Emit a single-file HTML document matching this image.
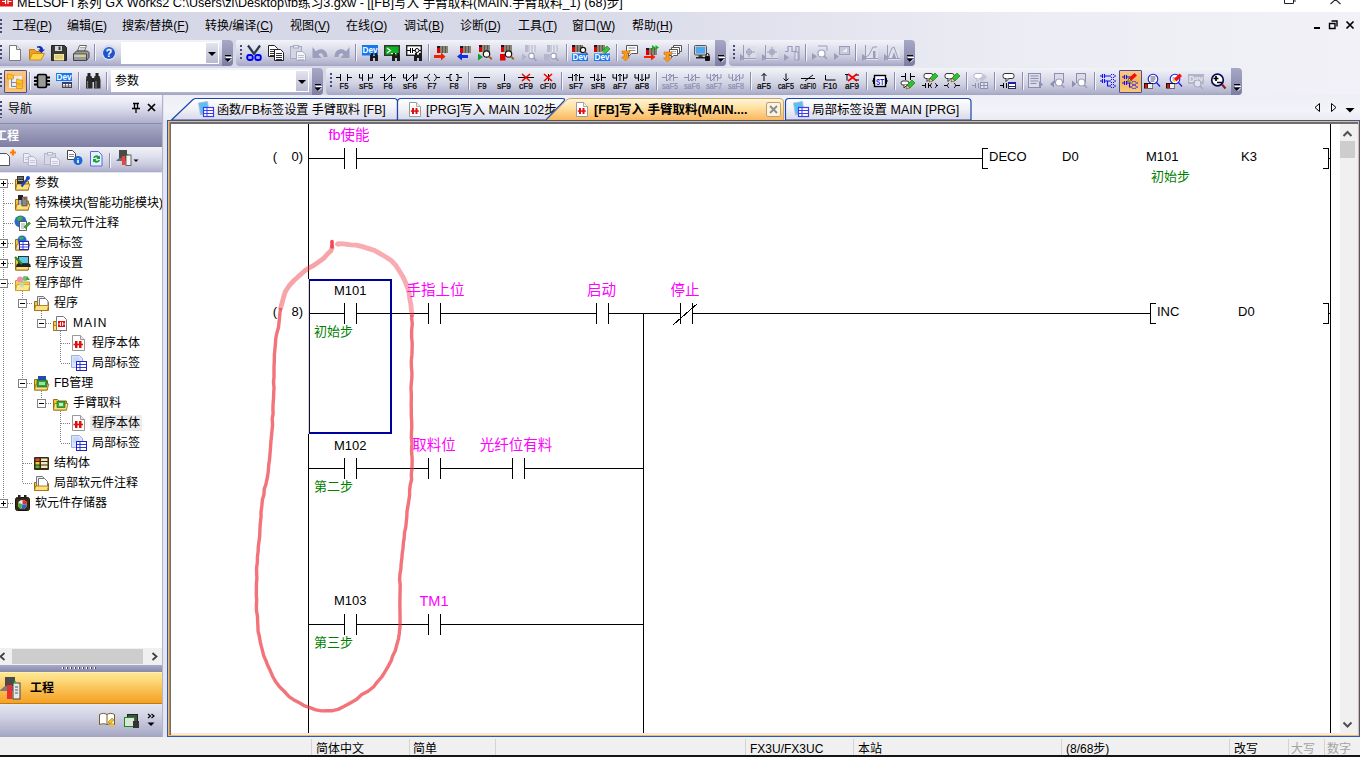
<!DOCTYPE html>
<html lang="zh-CN">
<head>
<meta charset="utf-8">
<title>MELSOFT系列 GX Works2</title>
<style>
*{box-sizing:border-box;margin:0;padding:0}
html,body{width:1366px;height:768px;overflow:hidden;background:#fff}
body{font-family:"Liberation Sans","Noto Sans CJK SC",sans-serif;font-size:12px;color:#000;position:relative}
#win,#win *:not(u){position:absolute}
#win{left:0;top:0;width:1360px;height:757px;overflow:hidden;background:#fff}
#title{left:0;top:0;width:1360px;height:12px;background:#fff;overflow:hidden}
#title .txt{left:17px;top:-5px;font-size:12.6px;white-space:nowrap;line-height:16px}
#dock{left:0;top:12px;width:1360px;height:84px;background:linear-gradient(90deg,#d5d6e6 0,#d8d9e8 40%,#ececf4 75%,#f1f1f7 100%)}
.mi{top:6px;font-size:12px;line-height:16px;white-space:nowrap}
.tbar{border-radius:0 4px 4px 0;background:linear-gradient(#f3f3f9 0,#e1e2ee 30%,#cfd0e1 60%,#b4b5cf 88%,#a3a4c2 100%)}
.tend{width:11px;border-radius:0 4px 4px 0;background:linear-gradient(#a7a8c5,#8f90b2 60%,#7c7da2)}
.grip{width:2px;height:14px;background:repeating-linear-gradient(#4a4a78 0,#4a4a78 2px,transparent 2px,transparent 4px)}
.sep{width:1px;background:#8d8eae;box-shadow:1px 0 0 #f4f4fa}
.ic{width:16px;height:16px;overflow:visible}
.actbtn{border:1px solid #4e4e88;background:linear-gradient(#fbc98a,#f6b45c 50%,#f9c77f);border-radius:1px}
.combo{background:#fff}
.cbtn{background:linear-gradient(#e4e4ef,#b9bad2);}
.tri{width:0;height:0;border-left:4px solid transparent;border-right:4px solid transparent;border-top:4px solid #000}
#status{left:0;top:737px;width:1360px;height:18px;background:#f0f0f0}
#status span{top:4px;font-size:12px;line-height:16px;white-space:nowrap}
#status i{top:2px;width:1px;height:16px;background:#d4d4d4}
#bline{left:0;top:755px;width:1360px;height:2px;background:#151515}


#nav{left:0;top:95px;width:164px;height:642px;background:#e3e4f0}
#navhead{left:0;top:0;width:163px;height:28px;background:linear-gradient(#f6f6fb 0,#e4e5f0 35%,#c9cadf 70%,#aeafcb 100%)}
#navhead span{left:8px;top:6px;font-size:12px;line-height:16px}
#projhead{left:0;top:28px;width:163px;height:24px;background:linear-gradient(#aaabc6,#9394b4 50%,#7e7fa4);border-top:1px solid #8a8bab}
#projhead span{left:-5px;top:4px;font-size:12px;line-height:16px;color:#fff;font-weight:bold}
#navtb{left:0;top:52px;width:163px;height:25px;border-radius:0 0 3px 0;background:linear-gradient(#f1f1f8 0,#dedfec 40%,#c6c7dc 75%,#abacc9 100%)}
#tree{left:0;top:78px;width:162px;height:475px;background:#fff;overflow:hidden}
#navr{left:162px;top:0;width:1px;height:642px;background:#b2b3ce}
.tr{left:0;height:20px;width:300px}
.tr span{top:2px;font-size:12px;line-height:16px;white-space:nowrap}
.tr .sel{background:#ececec;padding:0 2px;margin-left:-2px}
.bx{width:9px;height:9px;border:1px solid #848484;background:#fff;top:6px}
.bx:before{content:"";position:absolute;left:1px;top:3px;width:5px;height:1px;background:#000}
.bx.p:after{content:"";position:absolute;left:3px;top:1px;width:1px;height:5px;background:#000}
.hd{height:1px;top:10px;background:repeating-linear-gradient(90deg,#808080 0,#808080 1px,transparent 1px,transparent 2px)}
.vd{width:1px;background:repeating-linear-gradient(#808080 0,#808080 1px,transparent 1px,transparent 2px)}
#hscroll{left:0;top:553px;width:162px;height:17px;background:#f0f0f0}
#hscroll .th{left:12px;top:1px;width:131px;height:15px;background:#cdcdcd}
#split{left:0;top:570px;width:163px;height:7px;background:linear-gradient(#a9aac6,#8788ab)}
#projbtn{left:0;top:577px;width:163px;height:32px;background:linear-gradient(#fee793 0,#fcd573 30%,#f9bb4b 62%,#f4a124 100%);border-top:1px solid #fff0b8;border-bottom:1px solid #c07a10}
#projbtn span{left:30px;top:7px;font-size:12px;line-height:16px;font-weight:bold}
#navbot{left:0;top:609px;width:163px;height:33px;background:linear-gradient(#e6e6f0 0,#cfd0e2 40%,#b3b4ce 80%,#a2a3c0 100%)}
#mdi{left:164px;top:95px;width:1196px;height:642px;background:#e4e5ef}
#tabbar{left:0;top:0;width:1196px;height:27px;background:linear-gradient(#e9e9f3,#f2f2f8)}
.tabt{top:7px;font-size:12.5px;line-height:16px;white-space:nowrap}
#edwrap{left:3px;top:26px;width:1193px;height:616px;background:#fff;border:1px solid #f0a848;box-shadow:inset 0 0 0 1px #6a6a6a}
#edwrap{border-color:#f2aa4c}
#ed{left:0;top:0;width:1191px;height:614px;border:2px solid #7b7b7b;border-top-color:#8a8a8a;background:#fff;overflow:hidden}
.L{background:#000}
.dv{font-size:13px;line-height:15px;white-space:nowrap;color:#000}
.lb{font-size:14.5px;line-height:16px;white-space:nowrap;color:#ff00ff}
.cm{font-size:13px;line-height:14px;white-space:nowrap;color:#008000}
.sn{font-size:13px;line-height:15px;white-space:pre;color:#000}

</style>
</head>
<body>
<div id="win" class="abs">
<div id="title" class="abs"><div class="txt">MELSOFT系列 GX Works2 C:\Users\zl\Desktop\fb练习3.gxw - [[FB]写入 手臂取料(MAIN.手臂取料_1) (68)步]</div><svg style="left:0;top:0" width="14" height="8" viewBox="0 0 14 8"><rect x="0" y="0" width="13" height="6.5" fill="#e01818"/><path d="M2 1.500h3M5.5 0v4M8 0v4M8.5 1.500h3" stroke="#fff" stroke-width="1.2"/></svg><svg style="left:1282px;top:0" width="70" height="10" viewBox="0 0 70 10"><path d="M2.5 0v3.500h9v-3.500M11.5 1h2.5" stroke="#222" fill="none"/><path d="M53.5 -.5l-5 4.500M53.5 -.5l5 4.5" stroke="#222" stroke-width="1.1" fill="none"/></svg></div>
<div id="dock" class="abs">
<i class="grip" style="left:0;top:7px;height:14px"></i>
<span class="mi" style="left:12px">工程(<u>P</u>)</span>
<span class="mi" style="left:67px">编辑(<u>E</u>)</span>
<span class="mi" style="left:122px">搜索/替换(<u>F</u>)</span>
<span class="mi" style="left:205px">转换/编译(<u>C</u>)</span>
<span class="mi" style="left:290px">视图(<u>V</u>)</span>
<span class="mi" style="left:346px">在线(<u>O</u>)</span>
<span class="mi" style="left:404px">调试(<u>B</u>)</span>
<span class="mi" style="left:460px">诊断(<u>D</u>)</span>
<span class="mi" style="left:518px">工具(<u>T</u>)</span>
<span class="mi" style="left:572px">窗口(<u>W</u>)</span>
<span class="mi" style="left:632px">帮助(<u>H</u>)</span>
<svg style="left:1310px;top:6px" width="48" height="14" viewBox="0 0 48 14"><path d="M4 10h6" stroke="#000" stroke-width="2"/><path d="M21.5 3h5.500v5.500M19.5 5.500h5.500v5h-5.500z" stroke="#000" stroke-width="1.4" fill="none"/><path d="M36.5 3.500l7 7M43.5 3.500l-7 7" stroke="#000" stroke-width="1.7"/></svg>
<div class="tbar abs" style="left:0px;top:28px;width:233px;height:26px">
<i class="grip" style="left:0px;top:5px;height:15px"></i>
<svg class="ic" style="left:7px;top:5px" viewBox="0 0 16 16"><path d="M2.5 .5h7l4 4v11h-11z" fill="#fff" stroke="#7a7a7a"/><path d="M9.5 .5v4h4" fill="#e8e8e8" stroke="#7a7a7a"/></svg>
<svg class="ic" style="left:29px;top:5px" viewBox="0 0 16 16"><path d="M.5 15V4.5h5l1.5 2h5V9" fill="#f0a020" stroke="#c07a10"/><path d="M.5 15l3-6.5h12l-3.5 6.5z" fill="#ffd24a" stroke="#c89018"/><path d="M8 1.5c3-1.5 6 0 6 3h2l-3.5 3.5L9 4.500h2.200c0-1.5-1.5-2-3.2-1.500z" fill="#1030b0"/></svg>
<svg class="ic" style="left:51px;top:5px" viewBox="0 0 16 16"><path d="M.5 .5h13l2 2v13h-15z" fill="#3a3a36" stroke="#222"/><rect x="4" y="1" width="7" height="5" fill="#d8d8d8"/><rect x="7.5" y="1.5" width="2" height="3.5" fill="#3a3a36"/><rect x="3" y="9" width="10" height="6.5" fill="#f7e89a"/><path d="M4 11h8M4 13h8" stroke="#c8b860"/></svg>
<svg class="ic" style="left:73px;top:5px" viewBox="0 0 16 16"><path d="M4.5 6l2-5.500h7l-2 5.500z" fill="#fff" stroke="#666"/><path d="M7 2.500h5M6.5 4h5" stroke="#999" stroke-width=".8"/><path d="M.5 9l3-3h11l1.5 1.500v5l-2.5 3h-13z" fill="#9a9a9a" stroke="#444"/><path d="M.5 9h13v6.5" fill="none" stroke="#444"/><rect x="1" y="9.5" width="12" height="2.5" fill="#c8c8c8"/><rect x="7.5" y="10" width="3" height="1.5" fill="#f0e000"/></svg>
<i class="sep" style="left:94px;top:4px;height:17px"></i>
<svg class="ic" style="left:101px;top:5px" viewBox="0 0 16 16"><circle cx="8" cy="8" r="7.3" fill="#e8ecf8" stroke="#c4c8e0" stroke-width=".8"/><circle cx="8" cy="8" r="6" fill="#1f55c8"/><path d="M3.5 5.500a5.5 5.5 0 0 1 9 0a7 4 0 0 0-9 0z" fill="#6a92e8"/><text x="8" y="12" font-size="10.5" font-family="Liberation Sans, sans-serif" fill="#fff" text-anchor="middle" font-weight="bold">?</text></svg>
<div class="combo" style="left:121px;top:2px;width:98px;height:22px"><div class="cbtn" style="left:85px;top:1px;width:12px;height:20px"><i class="tri" style="left:2px;top:9px"></i></div></div>
<div class="tend" style="left:222px;top:0;height:26px"><svg style="left:2px;top:15px" width="8" height="8" viewBox="0 0 8 8"><path d="M1 .5h6" stroke="#000" stroke-width="1"/><path d="M1 1.500h6" stroke="#fff" stroke-width="1" transform="translate(1,1)"/><path d="M.5 3.500h7l-3.5 3.500z" fill="#000"/><path d="M4.5 7l3-3" stroke="#fff" stroke-width="1"/></svg></div>
</div>
<div class="tbar abs" style="left:236px;top:28px;width:490px;height:26px;border-radius:2px 4px 4px 4px">
<i class="grip" style="left:4px;top:5px;height:15px"></i>
<svg class="ic" style="left:10px;top:5px" viewBox="0 0 16 16"><path d="M2 .5l6.5 9M14 .5l-6.5 9" stroke="#2a3a4a" stroke-width="2.2"/><rect x="1.2" y="10" width="5.6" height="5" rx="2" fill="#9aa8ff" stroke="#0000f0" stroke-width="1.8"/><rect x="9.2" y="10" width="5.6" height="5" rx="2" fill="#9aa8ff" stroke="#0000f0" stroke-width="1.8"/></svg>
<svg class="ic" style="left:32px;top:5px" viewBox="0 0 16 16"><path d="M0.5 0.5h6l3 3v8h-9z" fill="#fff" stroke="#222"/><path d="M2 4.5h6" stroke="#333" stroke-width="1"/><path d="M2 6.5h6" stroke="#333" stroke-width="1"/><path d="M2 8.5h6" stroke="#333" stroke-width="1"/><path d="M2 10.5h6" stroke="#333" stroke-width="1"/><path d="M6.5 4.5h6l3 3v8h-9z" fill="#fff" stroke="#222"/><path d="M8 8.5h6" stroke="#333" stroke-width="1"/><path d="M8 10.5h6" stroke="#333" stroke-width="1"/><path d="M8 12.5h6" stroke="#333" stroke-width="1"/><path d="M8 14.5h6" stroke="#333" stroke-width="1"/></svg>
<svg class="ic" style="left:54px;top:5px" viewBox="0 0 16 16"><rect x=".5" y="1.5" width="11" height="12" fill="#d4d4e2" stroke="#a9a9c4"/><rect x="3.5" y=".5" width="5" height="2.5" fill="#e8e8f0" stroke="#a9a9c4"/><path d="M6.5 6.5h6l3 3v6h-9z" fill="#f4f4f8" stroke="#a9a9c4"/><path d="M8 10.5h6" stroke="#c0c0d4" stroke-width="1"/><path d="M8 12.5h6" stroke="#c0c0d4" stroke-width="1"/><path d="M8 14.5h6" stroke="#c0c0d4" stroke-width="1"/></svg>
<svg class="ic" style="left:76px;top:5px" viewBox="0 0 16 16"><path d="M.5 2v11h9l-3-3.500c1.5-2 5-1.5 5 2.500h4c0-8-8-10-11.5-5.500z" fill="#9d9dbc"/></svg>
<svg class="ic" style="left:98px;top:5px" viewBox="0 0 16 16"><path d="M15.5 2v11h-9l3-3.500c-1.5-2-5-1.5-5 2.500h-4c0-8 8-10 11.5-5.500z" fill="#9d9dbc"/></svg>
<i class="sep" style="left:119px;top:4px;height:17px"></i>
<svg class="ic" style="left:126px;top:5px" viewBox="0 0 16 16"><rect x="0" y="0" width="16" height="10.5" fill="#1478f0"/><text x="0.5" y="7.5" font-size="8.5" font-family="Liberation Sans, sans-serif" fill="#fff" text-anchor="start" textLength="15" lengthAdjust="spacingAndGlyphs" font-weight="bold">Dev</text><path d="M9 8h2v2h-2zM13 8h2v2h-2zM8 10h3v6h-3zM13 10h3v6h-3zM11 11h2v2h-2z" fill="#1a1a1a"/></svg>
<svg class="ic" style="left:148px;top:5px" viewBox="0 0 16 16"><rect x=".7" y=".7" width="14.6" height="9.6" fill="#10b020" stroke="#333" stroke-width="1.4"/><path d="M3 3l3.5 2.500l-3.5 2.500M7 8.500h5" stroke="#fff" fill="none" stroke-width="1.1"/><path d="M9 8h2v2h-2zM13 8h2v2h-2zM8 10h3v6h-3zM13 10h3v6h-3zM11 11h2v2h-2z" fill="#1a1a1a"/></svg>
<svg class="ic" style="left:170px;top:5px" viewBox="0 0 16 16"><rect x=".7" y=".7" width="14.6" height="9.6" fill="#fff" stroke="#222" stroke-width="1.4"/><path d="M1 5.500h3M4.5 3v5M6.5 3v5M7 5.500h2.500M13 5.500h2" stroke="#000"/><circle cx="11" cy="5.5" r="2" fill="none" stroke="#000"/><path d="M9 8h2v2h-2zM13 8h2v2h-2zM8 10h3v6h-3zM13 10h3v6h-3zM11 11h2v2h-2z" fill="#1a1a1a"/></svg>
<i class="sep" style="left:192px;top:4px;height:17px"></i>
<svg class="ic" style="left:198px;top:5px" viewBox="0 0 16 16"><rect x="3" y="1" width="3" height="2" fill="#1a1a1a"/><rect x="3" y="3" width="3" height="5" fill="#e00000"/><rect x="6" y="1" width="8" height="7" fill="#8a8676"/><path d="M8.5 1v7M11.5 1v7" stroke="#5a574c" stroke-width="1"/><path d="M0 10h7v-2.500l4.5 4l-4.5 4v-2.500h-7z" fill="#f02000"/></svg>
<svg class="ic" style="left:220px;top:5px" viewBox="0 0 16 16"><rect x="4" y="1" width="3" height="2" fill="#1a1a1a"/><rect x="4" y="3" width="3" height="5" fill="#e00000"/><rect x="7" y="1" width="8" height="7" fill="#8a8676"/><path d="M9.5 1v7M12.5 1v7" stroke="#5a574c" stroke-width="1"/><path d="M12 10h-6v-2.500l-5 4l5 4v-2.500h6z" fill="#1030e0"/></svg>
<svg class="ic" style="left:242px;top:5px" viewBox="0 0 16 16"><rect x="1" y="0" width="3" height="2" fill="#1a1a1a"/><rect x="1" y="2" width="3" height="5" fill="#e00000"/><rect x="4" y="0" width="8" height="7" fill="#8a8676"/><path d="M6.5 0v7M9.5 0v7" stroke="#5a574c" stroke-width="1"/><path d="M0 8.500l5 3.500l-5 3.500z" fill="#10a020"/><circle cx="8.5" cy="9" r="3.2" fill="#fff" stroke="#111" stroke-width="1.2"/><path d="M10.74 11.24l3 3" stroke="#a05a20" stroke-width="1.8"/></svg>
<svg class="ic" style="left:264px;top:5px" viewBox="0 0 16 16"><rect x="1" y="0" width="3" height="2" fill="#1a1a1a"/><rect x="1" y="2" width="3" height="5" fill="#e00000"/><rect x="4" y="0" width="8" height="7" fill="#8a8676"/><path d="M6.5 0v7M9.5 0v7" stroke="#5a574c" stroke-width="1"/><rect x="0" y="9" width="5.5" height="6.5" fill="#e00000"/><circle cx="8.5" cy="9" r="3.2" fill="#fff" stroke="#111" stroke-width="1.2"/><path d="M10.74 11.24l3 3" stroke="#a05a20" stroke-width="1.8"/></svg>
<svg class="ic" style="left:286px;top:5px" viewBox="0 0 16 16"><rect x="3" y="0" width="3" height="2" fill="#b9b9cf"/><rect x="3" y="2" width="3" height="5" fill="#b9b9cf"/><rect x="6" y="0" width="8" height="7" fill="#c9c9da"/><path d="M8.5 0v7M11.5 0v7" stroke="#e6e6ee" stroke-width="1"/><path d="M0 8.500l5 3.500l-5 3.500z" fill="#b4b4cc"/><circle cx="9.5" cy="11" r="2.8" fill="#fff" stroke="#a0a0bc" stroke-width="1.2"/><path d="M11.459999999999999 12.959999999999999l3 3" stroke="#a0a0bc" stroke-width="1.8"/></svg>
<svg class="ic" style="left:308px;top:5px" viewBox="0 0 16 16"><rect x="3" y="0" width="3" height="2" fill="#b9b9cf"/><rect x="3" y="2" width="3" height="5" fill="#b9b9cf"/><rect x="6" y="0" width="8" height="7" fill="#c9c9da"/><path d="M8.5 0v7M11.5 0v7" stroke="#e6e6ee" stroke-width="1"/><rect x="0" y="9" width="5.5" height="6.5" fill="#b4b4cc"/><circle cx="9.5" cy="11" r="2.8" fill="#fff" stroke="#a0a0bc" stroke-width="1.2"/><path d="M11.459999999999999 12.959999999999999l3 3" stroke="#a0a0bc" stroke-width="1.8"/></svg>
<i class="sep" style="left:330px;top:4px;height:17px"></i>
<svg class="ic" style="left:336px;top:5px" viewBox="0 0 16 16"><rect x="0" y="0" width="3" height="2" fill="#1a1a1a"/><rect x="0" y="2" width="3" height="5" fill="#e00000"/><rect x="3" y="0" width="8" height="7" fill="#8a8676"/><path d="M5.5 0v7M8.5 0v7" stroke="#5a574c" stroke-width="1"/><circle cx="11" cy="5" r="2.6" fill="#fff" stroke="#111" stroke-width="1.2"/><path d="M12.82 6.82l3 3" stroke="#a05a20" stroke-width="1.8"/><rect x="0" y="8.5" width="16" height="7.5" fill="#1478f0"/><text x="0.5" y="15.0" font-size="8.5" font-family="Liberation Sans, sans-serif" fill="#fff" text-anchor="start" textLength="15" lengthAdjust="spacingAndGlyphs" font-weight="bold">Dev</text></svg>
<svg class="ic" style="left:358px;top:5px" viewBox="0 0 16 16"><rect x="0" y="0" width="3" height="2" fill="#1a1a1a"/><rect x="0" y="2" width="3" height="5" fill="#e00000"/><rect x="3" y="0" width="8" height="7" fill="#8a8676"/><path d="M5.5 0v7M8.5 0v7" stroke="#5a574c" stroke-width="1"/><path d="M8 6l5-5l3 3l-5 5z" fill="#40c040" stroke="#107010" stroke-width=".6"/><path d="M8 6l-1 4l4-1z" fill="#f0d060"/><rect x="0" y="8.5" width="16" height="7.5" fill="#1478f0"/><text x="0.5" y="15.0" font-size="8.5" font-family="Liberation Sans, sans-serif" fill="#fff" text-anchor="start" textLength="15" lengthAdjust="spacingAndGlyphs" font-weight="bold">Dev</text></svg>
<i class="sep" style="left:380px;top:4px;height:17px"></i>
<svg class="ic" style="left:386px;top:5px" viewBox="0 0 16 16"><path d="M4.5 .5h11v8h-6l-3 3v-3h-2z" fill="#fff" stroke="#555"/><path d="M6.5 3h7M6.5 5.500h7" stroke="#888"/><path d="M3 6h5v2.500h-3v3.500h2.500l-4 4l-4-4h2.500v-3.500h-2v-2.500z" fill="#ff9a10" stroke="#c06000" stroke-width=".5" transform="translate(0,0)"/></svg>
<svg class="ic" style="left:408px;top:5px" viewBox="0 0 16 16"><rect x="2" y="3" width="3" height="2" fill="#1a1a1a"/><rect x="2" y="5" width="3" height="5" fill="#e00000"/><rect x="5" y="3" width="8" height="7" fill="#8a8676"/><path d="M7.5 3v7M10.5 3v7" stroke="#5a574c" stroke-width="1"/><path d="M8 0l3.5 2.500l-3.5 2.500zM11.5 0l3.5 2.500l-3.5 2.500z" fill="#10b020"/><path d="M0 11h7v-2.500l4.5 3.500l-4.5 3.500v-2.500h-7z" fill="#f02000"/></svg>
<svg class="ic" style="left:430px;top:5px" viewBox="0 0 16 16"><path d="M7.5 .5h8v6h-8z" fill="#fff" stroke="#555"/><path d="M5.5 2.500h8v6h-8z" fill="#fff" stroke="#555"/><path d="M3.5 4.500h8v6h-4l-2 2v-2h-2z" fill="#fff" stroke="#555"/><path d="M5 6.500h5M5 8.500h5" stroke="#999" stroke-width=".8"/><path d="M3 6h5v2.500h-3v3.500h2.500l-4 4l-4-4h2.500v-3.500h-2v-2.500z" fill="#ff9a10" stroke="#c06000" stroke-width=".5" transform="translate(-2,1)"/></svg>
<i class="sep" style="left:452px;top:4px;height:17px"></i>
<svg class="ic" style="left:458px;top:5px" viewBox="0 0 16 16"><rect x=".5" y=".5" width="12" height="9.5" rx="1" fill="#c8c8c8" stroke="#555"/><rect x="2" y="2" width="9" height="6.5" fill="#4aa8f4"/><rect x="4.5" y="10" width="4" height="2" fill="#444"/><rect x="2" y="12" width="9" height="1.5" fill="#222"/><rect x="11" y="11" width="5" height="5" rx="1" fill="#111"/><path d="M12 11.500v-1.500a1.5 1.5 0 0 1 3 0v1.5" fill="none" stroke="#111"/></svg>
<div class="tend" style="left:479px;top:0;height:26px"><svg style="left:2px;top:15px" width="8" height="8" viewBox="0 0 8 8"><path d="M1 .5h6" stroke="#000" stroke-width="1"/><path d="M1 1.500h6" stroke="#fff" stroke-width="1" transform="translate(1,1)"/><path d="M.5 3.500h7l-3.5 3.500z" fill="#000"/><path d="M4.5 7l3-3" stroke="#fff" stroke-width="1"/></svg></div>
</div>
<div class="tbar abs" style="left:729px;top:28px;width:186px;height:26px;border-radius:2px 4px 4px 4px">
<i class="grip" style="left:4px;top:5px;height:15px"></i>
<svg class="ic" style="left:11px;top:5px" viewBox="0 0 16 16"><path d="M0 9l5 3.500l-5 3.500z" fill="#9c9cba"/><rect x="3" y="1" width="13" height="14" fill="#dedee8" opacity=".8"/><path d="M3.5 0v15M2 13.500h14M6 7h9M9 3v9" stroke="#9c9cba" fill="none"/><circle cx="9" cy="7" r="2.5" fill="none" stroke="#9c9cba"/></svg>
<svg class="ic" style="left:33px;top:5px" viewBox="0 0 16 16"><path d="M0 9l5 3.500l-5 3.500z" fill="#9c9cba"/><rect x="3" y="1" width="13" height="14" fill="#dedee8" opacity=".8"/><path d="M3.5 0v15M2 13.500h14M5 7h10M10 2v10" stroke="#9c9cba" fill="none"/><rect x="8" y="5" width="4" height="4" fill="none" stroke="#9c9cba"/></svg>
<svg class="ic" style="left:55px;top:5px" viewBox="0 0 16 16"><path d="M0 9l5 3.500l-5 3.500z" fill="#9c9cba"/><path d="M1 6.500h3v-5h4v5h4v-5h3v13h-3v-8" stroke="#9c9cba" fill="none" stroke-width="1.2"/><rect x="11" y="7" width="3" height="8" fill="#e4e4ee" stroke="#9c9cba"/></svg>
<i class="sep" style="left:76px;top:4px;height:17px"></i>
<svg class="ic" style="left:83px;top:5px" viewBox="0 0 16 16"><path d="M0 8l5 3.500l-5 3.500z" fill="#9c9cba"/><path d="M6 1h9v5" stroke="#9c9cba" fill="none"/><circle cx="9.5" cy="8.5" r="3.5" fill="#fff" stroke="#a0a0bc" stroke-width="1.2"/><path d="M11.95 10.95l3 3" stroke="#a0a0bc" stroke-width="1.8"/></svg>
<svg class="ic" style="left:105px;top:5px" viewBox="0 0 16 16"><path d="M0 8l5 3.500l-5 3.500z" fill="#9c9cba"/><rect x="5.5" y="1.5" width="10" height="8" fill="#c8c8dc" stroke="#9c9cba"/><path d="M8 7l5-4v4z" fill="#eeeef4"/></svg>
<i class="sep" style="left:126px;top:4px;height:17px"></i>
<svg class="ic" style="left:133px;top:5px" viewBox="0 0 16 16"><path d="M0 9l5 3.500l-5 3.500z" fill="#9c9cba"/><rect x="3" y="1" width="13" height="14" fill="#e2e2ec" opacity=".9"/><path d="M3.5 0v15M2 13.500h14" stroke="#9c9cba"/><path d="M4 12l3-2l4-8h4" stroke="#9c9cba" fill="none"/><rect x="11" y="6" width="2.5" height="7" fill="#9c9cba"/></svg>
<svg class="ic" style="left:155px;top:5px" viewBox="0 0 16 16"><path d="M0 9l5 3.500l-5 3.500z" fill="#9c9cba"/><rect x="3" y="1" width="13" height="14" fill="#e2e2ec" opacity=".9"/><path d="M3.5 0v15M2 13.500h14" stroke="#9c9cba"/><path d="M4 13l4-10l2-1l4 11" stroke="#9c9cba" fill="none"/><path d="M10 7l2 6h-4z" fill="#9c9cba"/></svg>
<div class="tend" style="left:175px;top:0;height:26px"><svg style="left:2px;top:15px" width="8" height="8" viewBox="0 0 8 8"><path d="M1 .5h6" stroke="#000" stroke-width="1"/><path d="M1 1.500h6" stroke="#fff" stroke-width="1" transform="translate(1,1)"/><path d="M.5 3.500h7l-3.5 3.500z" fill="#000"/><path d="M4.5 7l3-3" stroke="#fff" stroke-width="1"/></svg></div>
</div>
<div class="tbar abs" style="left:0px;top:56px;width:323px;height:27px">
<i class="grip" style="left:0px;top:5px;height:15px"></i>
<div class="actbtn" style="left:4px;top:2px;width:23px;height:23px"></div>
<svg class="ic" style="left:7px;top:5px" viewBox="0 0 16 16"><rect x="2" y="3" width="13" height="12" fill="#ececf2"/><path d="M4.5 6v7.500h6M4.5 9.500h6" stroke="#888" fill="none"/><path d="M.5 1h2l1 1h3v4h-6z" fill="#ffc020" stroke="#c88a10" stroke-width=".6"/><path d="M9.5 6h2l1 1h3v4h-6z" fill="#ffc020" stroke="#c88a10" stroke-width=".6"/><path d="M9.5 11h2l1 1h3v3.500h-6z" fill="#ffc020" stroke="#c88a10" stroke-width=".6"/></svg>
<i class="sep" style="left:29px;top:4px;height:18px"></i>
<svg class="ic" style="left:34px;top:5px" viewBox="0 0 16 16"><rect x="3.5" y="1.5" width="9" height="13" rx="1.5" fill="#9a9a9a" stroke="#000" stroke-width="1.6"/><path d="M0 4.500h3M0 8h3M0 11.500h3M13 4.500h3M13 8h3M13 11.500h3" stroke="#000" stroke-width="1.8"/></svg>
<svg class="ic" style="left:56px;top:5px" viewBox="0 0 16 16"><rect x="0" y="0" width="16" height="8" fill="#1478f0"/><text x="0.5" y="7" font-size="8.5" font-family="Liberation Sans, sans-serif" fill="#fff" text-anchor="start" textLength="15" lengthAdjust="spacingAndGlyphs" font-weight="bold">Dev</text><rect x="6.5" y="9.5" width="9" height="5" fill="#fff" stroke="#444"/><rect x="6" y="9" width="10" height="2" fill="#3a3a7a"/><path d="M9.5 11v4M12.5 11v4M6.5 13h9" stroke="#444" stroke-width=".8"/></svg>
<i class="sep" style="left:78px;top:4px;height:18px"></i>
<svg class="ic" style="left:85px;top:5px" viewBox="0 0 16 16"><path d="M2.5 0h3v3h-3zM10.5 0h3v3h-3z" fill="#222"/><path d="M1.5 3h5l1 4v8.500h-6.500v-8.500zM9.5 3h5l1 4v8.500h-6.500v-8.500z" fill="#2a2a2a"/><rect x="6.5" y="5" width="3" height="4" fill="#222"/><path d="M2.5 8v7M11 8v7" stroke="#7a7a7a" stroke-width="1.2"/></svg>
<i class="sep" style="left:106px;top:4px;height:18px"></i>
<div class="combo" style="left:111px;top:2px;width:198px;height:22px"><span style="left:4px;top:3px;font-size:12px;line-height:16px">参数</span><div class="cbtn" style="left:185px;top:1px;width:12px;height:20px"><i class="tri" style="left:2px;top:9px"></i></div></div>
<div class="tend" style="left:312px;top:0;height:27px"><svg style="left:2px;top:16px" width="8" height="8" viewBox="0 0 8 8"><path d="M1 .5h6" stroke="#000" stroke-width="1"/><path d="M1 1.500h6" stroke="#fff" stroke-width="1" transform="translate(1,1)"/><path d="M.5 3.500h7l-3.5 3.500z" fill="#000"/><path d="M4.5 7l3-3" stroke="#fff" stroke-width="1"/></svg></div>
</div>
<div class="tbar abs" style="left:326px;top:56px;width:916px;height:27px;border-radius:2px 4px 4px 4px">
<i class="grip" style="left:4px;top:5px;height:15px"></i>
<svg class="ic" style="left:10px;top:5px" viewBox="0 0 16 16"><path d="M0 4.500h4M4.5 1v7M11.5 1v7M12 4.500h4" stroke="#000" stroke-width="1" fill="none"/><text stroke="#000" stroke-width=".22" x="8" y="15.8" font-size="8.6" font-family="Liberation Sans, sans-serif" fill="#000" text-anchor="middle" textLength="9" lengthAdjust="spacingAndGlyphs">F5</text></svg>
<svg class="ic" style="left:32px;top:5px" viewBox="0 0 16 16"><path d="M1.5 1v4h3M4.5 1v7M10.5 1v7M11 5h3.500v-4" stroke="#000" stroke-width="1" fill="none"/><text stroke="#000" stroke-width=".22" x="8" y="15.8" font-size="8.6" font-family="Liberation Sans, sans-serif" fill="#000" text-anchor="middle" textLength="14" lengthAdjust="spacingAndGlyphs">sF5</text></svg>
<svg class="ic" style="left:54px;top:5px" viewBox="0 0 16 16"><path d="M0 4.500h4M4.5 1v7M11.5 1v7M12 4.500h4M5 8l6-6" stroke="#000" stroke-width="1" fill="none"/><text stroke="#000" stroke-width=".22" x="8" y="15.8" font-size="8.6" font-family="Liberation Sans, sans-serif" fill="#000" text-anchor="middle" textLength="9" lengthAdjust="spacingAndGlyphs">F6</text></svg>
<svg class="ic" style="left:76px;top:5px" viewBox="0 0 16 16"><path d="M1.5 1v4h3M4.5 1v7M11.5 1v7M12 5h3v-4M5 8l6-6" stroke="#000" stroke-width="1" fill="none"/><text stroke="#000" stroke-width=".22" x="8" y="15.8" font-size="8.6" font-family="Liberation Sans, sans-serif" fill="#000" text-anchor="middle" textLength="14" lengthAdjust="spacingAndGlyphs">sF6</text></svg>
<svg class="ic" style="left:98px;top:5px" viewBox="0 0 16 16"><path d="M0 4.500h3.500M12.5 4.500h3.500M6 1c-3 2-3 5 0 7M10 1c3 2 3 5 0 7" stroke="#000" stroke-width="1" fill="none"/><text stroke="#000" stroke-width=".22" x="8" y="15.8" font-size="8.6" font-family="Liberation Sans, sans-serif" fill="#000" text-anchor="middle" textLength="9" lengthAdjust="spacingAndGlyphs">F7</text></svg>
<svg class="ic" style="left:120px;top:5px" viewBox="0 0 16 16"><path d="M0 4.500h3.500M6 1.500h-2v6h2M10 1.500h2v6h-2M12.5 4.500h3.5" stroke="#000" stroke-width="1" fill="none"/><text stroke="#000" stroke-width=".22" x="8" y="15.8" font-size="8.6" font-family="Liberation Sans, sans-serif" fill="#000" text-anchor="middle" textLength="9" lengthAdjust="spacingAndGlyphs">F8</text></svg>
<i class="sep" style="left:142px;top:4px;height:18px"></i>
<svg class="ic" style="left:148px;top:5px" viewBox="0 0 16 16"><path d="M0 4.500h16" stroke="#000" stroke-width="1" fill="none"/><text stroke="#000" stroke-width=".22" x="8" y="15.8" font-size="8.6" font-family="Liberation Sans, sans-serif" fill="#000" text-anchor="middle" textLength="9" lengthAdjust="spacingAndGlyphs">F9</text></svg>
<svg class="ic" style="left:170px;top:5px" viewBox="0 0 16 16"><path d="M8.5 1v7" stroke="#000" stroke-width="1" fill="none"/><text stroke="#000" stroke-width=".22" x="8" y="15.8" font-size="8.6" font-family="Liberation Sans, sans-serif" fill="#000" text-anchor="middle" textLength="14" lengthAdjust="spacingAndGlyphs">sF9</text></svg>
<svg class="ic" style="left:192px;top:5px" viewBox="0 0 16 16"><path d="M0 4.500h16" stroke="#000" stroke-width="1" fill="none"/><path d="M4 1l8 7M12 1l-8 7" stroke="#f00000" stroke-width="1.6" fill="none"/><text stroke="#000" stroke-width=".22" x="8" y="15.8" font-size="8.6" font-family="Liberation Sans, sans-serif" fill="#000" text-anchor="middle" textLength="14" lengthAdjust="spacingAndGlyphs">cF9</text></svg>
<svg class="ic" style="left:214px;top:5px" viewBox="0 0 16 16"><path d="M8.5 1v7" stroke="#000" stroke-width="1" fill="none"/><path d="M4 1l8 7M12 1l-8 7" stroke="#f00000" stroke-width="1.6" fill="none"/><text stroke="#000" stroke-width=".22" x="8" y="15.8" font-size="8.6" font-family="Liberation Sans, sans-serif" fill="#000" text-anchor="middle" textLength="16" lengthAdjust="spacingAndGlyphs">cFI0</text></svg>
<i class="sep" style="left:235px;top:4px;height:18px"></i>
<svg class="ic" style="left:242px;top:5px" viewBox="0 0 16 16"><path d="M0 4.500h4M4.5 1v7M11.5 1v7M12 4.500h4M8 8v-7M6 3l2-2l2 2" stroke="#000" stroke-width="1" fill="none"/><text stroke="#000" stroke-width=".22" x="8" y="15.8" font-size="8.6" font-family="Liberation Sans, sans-serif" fill="#000" text-anchor="middle" textLength="14" lengthAdjust="spacingAndGlyphs">sF7</text></svg>
<svg class="ic" style="left:264px;top:5px" viewBox="0 0 16 16"><path d="M0 4.500h4M4.5 1v7M11.5 1v7M12 4.500h4M8 1v7M6 6l2 2l2-2" stroke="#000" stroke-width="1" fill="none"/><text stroke="#000" stroke-width=".22" x="8" y="15.8" font-size="8.6" font-family="Liberation Sans, sans-serif" fill="#000" text-anchor="middle" textLength="14" lengthAdjust="spacingAndGlyphs">sF8</text></svg>
<svg class="ic" style="left:286px;top:5px" viewBox="0 0 16 16"><path d="M1 1v4h3M4.5 1v7M11.5 1v7M12 5h3v-4M8 8v-7M6 3l2-2l2 2" stroke="#000" stroke-width="1" fill="none"/><text stroke="#000" stroke-width=".22" x="8" y="15.8" font-size="8.6" font-family="Liberation Sans, sans-serif" fill="#000" text-anchor="middle" textLength="14" lengthAdjust="spacingAndGlyphs">aF7</text></svg>
<svg class="ic" style="left:308px;top:5px" viewBox="0 0 16 16"><path d="M1 1v4h3M4.5 1v7M11.5 1v7M12 5h3v-4M8 1v7M6 6l2 2l2-2" stroke="#000" stroke-width="1" fill="none"/><text stroke="#000" stroke-width=".22" x="8" y="15.8" font-size="8.6" font-family="Liberation Sans, sans-serif" fill="#000" text-anchor="middle" textLength="14" lengthAdjust="spacingAndGlyphs">aF8</text></svg>
<i class="sep" style="left:330px;top:4px;height:18px"></i>
<svg class="ic" style="left:336px;top:5px" viewBox="0 0 16 16"><path d="M0 4.500h4M4.5 1v7M11.5 1v7M12 4.500h4M8 8v-7M6 3l2-2l2 2M5 8l7-7" stroke="#8e8eb2" stroke-width="1" fill="none"/><text stroke="#8e8eb2" stroke-width=".22" x="8" y="15.8" font-size="8.6" font-family="Liberation Sans, sans-serif" fill="#8e8eb2" text-anchor="middle" textLength="16" lengthAdjust="spacingAndGlyphs">saF5</text></svg>
<svg class="ic" style="left:358px;top:5px" viewBox="0 0 16 16"><path d="M0 4.500h4M4.5 1v7M11.5 1v7M12 4.500h4M8 1v7M6 6l2 2l2-2M5 8l7-7" stroke="#8e8eb2" stroke-width="1" fill="none"/><text stroke="#8e8eb2" stroke-width=".22" x="8" y="15.8" font-size="8.6" font-family="Liberation Sans, sans-serif" fill="#8e8eb2" text-anchor="middle" textLength="16" lengthAdjust="spacingAndGlyphs">saF6</text></svg>
<svg class="ic" style="left:380px;top:5px" viewBox="0 0 16 16"><path d="M1 1v4h3M4.5 1v7M11.5 1v7M12 5h3v-4M8 8v-7M6 3l2-2l2 2M5 8l7-7" stroke="#8e8eb2" stroke-width="1" fill="none"/><text stroke="#8e8eb2" stroke-width=".22" x="8" y="15.8" font-size="8.6" font-family="Liberation Sans, sans-serif" fill="#8e8eb2" text-anchor="middle" textLength="16" lengthAdjust="spacingAndGlyphs">saF7</text></svg>
<svg class="ic" style="left:402px;top:5px" viewBox="0 0 16 16"><path d="M1 1v4h3M4.5 1v7M11.5 1v7M12 5h3v-4M8 1v7M6 6l2 2l2-2M5 8l7-7" stroke="#8e8eb2" stroke-width="1" fill="none"/><text stroke="#8e8eb2" stroke-width=".22" x="8" y="15.8" font-size="8.6" font-family="Liberation Sans, sans-serif" fill="#8e8eb2" text-anchor="middle" textLength="16" lengthAdjust="spacingAndGlyphs">saF8</text></svg>
<i class="sep" style="left:424px;top:4px;height:18px"></i>
<svg class="ic" style="left:430px;top:5px" viewBox="0 0 16 16"><path d="M8 8v-7.500M5.5 3l2.5-2.500l2.5 2.5" stroke="#000" stroke-width="1" fill="none"/><text stroke="#000" stroke-width=".22" x="8" y="15.8" font-size="8.6" font-family="Liberation Sans, sans-serif" fill="#000" text-anchor="middle" textLength="14" lengthAdjust="spacingAndGlyphs">aF5</text></svg>
<svg class="ic" style="left:452px;top:5px" viewBox="0 0 16 16"><path d="M8 .5v7.500M5.5 5.500l2.5 2.500l2.5-2.5" stroke="#000" stroke-width="1" fill="none"/><text stroke="#000" stroke-width=".22" x="8" y="15.8" font-size="8.6" font-family="Liberation Sans, sans-serif" fill="#000" text-anchor="middle" textLength="16" lengthAdjust="spacingAndGlyphs">caF5</text></svg>
<svg class="ic" style="left:474px;top:5px" viewBox="0 0 16 16"><path d="M1 5.500h14M5 8l8-6" stroke="#000" stroke-width="1" fill="none"/><text stroke="#000" stroke-width=".22" x="8" y="15.8" font-size="8.6" font-family="Liberation Sans, sans-serif" fill="#000" text-anchor="middle" textLength="16" lengthAdjust="spacingAndGlyphs">caFI0</text></svg>
<svg class="ic" style="left:496px;top:5px" viewBox="0 0 16 16"><path d="M3.5 2v5h10" stroke="#000" stroke-width="1" fill="none"/><text stroke="#000" stroke-width=".22" x="8" y="15.8" font-size="8.6" font-family="Liberation Sans, sans-serif" fill="#000" text-anchor="middle" textLength="14" lengthAdjust="spacingAndGlyphs">F10</text></svg>
<svg class="ic" style="left:518px;top:5px" viewBox="0 0 16 16"><path d="M1 1.500h4M3 1.500v6M11 2h4M11 7h4" stroke="#000" stroke-width="1" fill="none"/><path d="M4 1l9 7M13 1l-9 7" stroke="#f00000" stroke-width="1.6" fill="none"/><text stroke="#000" stroke-width=".22" x="8" y="15.8" font-size="8.6" font-family="Liberation Sans, sans-serif" fill="#000" text-anchor="middle" textLength="14" lengthAdjust="spacingAndGlyphs">aF9</text></svg>
<i class="sep" style="left:540px;top:4px;height:18px"></i>
<svg class="ic" style="left:546px;top:5px" viewBox="0 0 16 16"><path d="M0 8h2M14 8h2M1.5 5v6M14.5 5v6" stroke="#000"/><rect x="2.5" y="2.5" width="11" height="11" fill="#fff" stroke="#000" stroke-width="1.4"/><text x="8" y="11.5" font-size="9" font-family="Liberation Sans, sans-serif" fill="#1010f0" text-anchor="middle" textLength="8" lengthAdjust="spacingAndGlyphs" font-weight="bold">ST</text></svg>
<i class="sep" style="left:568px;top:4px;height:18px"></i>
<svg class="ic" style="left:574px;top:5px" viewBox="0 0 16 16"><path d="M1 3.500h4M5.5 0v7M10.5 0v7M11 3.500h4" stroke="#000" stroke-width="1" fill="none"/><rect x="1" y="8" width="8" height="4" rx="2" fill="#fff" stroke="#333" stroke-width="1"/><path d="M4 12l0 3l3-3" fill="#fff" stroke="#333" stroke-width="1"/><path d="M7 12l5-5l3 3l-5 5z" fill="#2fc02f" stroke="#0a700a" stroke-width=".6"/><path d="M7 12l-1 4l4-1z" fill="#f0d060" stroke="#333" stroke-width=".5"/></svg>
<svg class="ic" style="left:596px;top:5px" viewBox="0 0 16 16"><rect x="2" y="0.5" width="9" height="5" rx="2" fill="#fff" stroke="#333" stroke-width="1"/><path d="M5 5.5l0 3l3-3" fill="#fff" stroke="#333" stroke-width="1"/><path d="M8 5l5-5l3 3l-5 5z" fill="#2fc02f" stroke="#0a700a" stroke-width=".6"/><path d="M8 5l-1 4l4-1z" fill="#f0d060" stroke="#333" stroke-width=".5"/><path d="M0 12.500h3M3.5 10v5M6.5 10v5M7 12.500h2M14 12.500h2M10 10c-2 1.5-2 3.5 0 5M13 10c2 1.5 2 3.5 0 5" stroke="#000" stroke-width="1" fill="none"/></svg>
<svg class="ic" style="left:618px;top:5px" viewBox="0 0 16 16"><rect x="1" y="0.5" width="9" height="5" rx="2" fill="#fff" stroke="#333" stroke-width="1"/><path d="M4 5.5l0 3l3-3" fill="#fff" stroke="#333" stroke-width="1"/><path d="M8 5l5-5l3 3l-5 5z" fill="#2fc02f" stroke="#0a700a" stroke-width=".6"/><path d="M8 5l-1 4l4-1z" fill="#f0d060" stroke="#333" stroke-width=".5"/><path d="M0 12.500h3M12 12.500h4M5 10c-2 1.5-2 3.5 0 5M10 10c2 1.5 2 3.5 0 5" stroke="#000" stroke-width="1" fill="none"/></svg>
<i class="sep" style="left:640px;top:4px;height:18px"></i>
<svg class="ic" style="left:646px;top:5px" viewBox="0 0 16 16"><rect x="2" y="0.5" width="9" height="5" rx="2" fill="#fff" stroke="#b4b4cc" stroke-width="1"/><path d="M5 5.5l0 3l3-3" fill="#fff" stroke="#b4b4cc" stroke-width="1"/><path d="M7 6l5-5l3 3l-5 5z" fill="#c4c4d8"/><path d="M0 12.500h3M3.5 10v5M6.5 10v5" stroke="#8e8eb2" stroke-width="1" fill="none"/><rect x="8.5" y="9.5" width="7" height="6" fill="#e4e4ee" stroke="#8e8eb2"/><path d="M8.5 12.500h7M12 9.500v6" stroke="#8e8eb2"/></svg>
<i class="sep" style="left:668px;top:4px;height:18px"></i>
<svg class="ic" style="left:674px;top:5px" viewBox="0 0 16 16"><rect x="3" y="0.5" width="11" height="5" rx="2" fill="#fff" stroke="#333" stroke-width="1"/><path d="M6 5.5l0 3l3-3" fill="#fff" stroke="#333" stroke-width="1"/><path d="M0 12.500h3M3.5 10v5M6.5 10v5" stroke="#000" stroke-width="1" fill="none"/><rect x="8.5" y="9.5" width="7" height="6" fill="#fff" stroke="#333"/><rect x="8" y="9" width="8" height="2" fill="#2020a0"/><path d="M8.5 13.500h7" stroke="#2020a0"/></svg>
<i class="sep" style="left:696px;top:4px;height:18px"></i>
<svg class="ic" style="left:702px;top:5px" viewBox="0 0 16 16"><rect x=".5" y=".5" width="12" height="14" fill="#dcdce8" stroke="#8e8eb2"/><path d="M2.5 3h8M2.5 5.500h8M2.5 8h8M2.5 10.500h6" stroke="#8e8eb2"/><path d="M11 8l4 3.500l-4 3.500z" fill="#8e8eb2"/></svg>
<svg class="ic" style="left:724px;top:5px" viewBox="0 0 16 16"><rect x="4.5" y=".5" width="9" height="9" fill="#dcdce8" stroke="#8e8eb2"/><path d="M0 11l4-3.500v7z" fill="#8e8eb2"/><circle cx="9" cy="9.5" r="3.5" fill="#fff" stroke="#a0a0bc" stroke-width="1.2"/><path d="M11.45 11.95l3 3" stroke="#a0a0bc" stroke-width="1.8"/></svg>
<svg class="ic" style="left:746px;top:5px" viewBox="0 0 16 16"><rect x="4.5" y=".5" width="9" height="9" fill="#dcdce8" stroke="#8e8eb2"/><path d="M0 7.500l4 3.500l-4 3.500z" fill="#8e8eb2"/><circle cx="9.5" cy="9.5" r="3.5" fill="#fff" stroke="#a0a0bc" stroke-width="1.2"/><path d="M11.95 11.95l3 3" stroke="#a0a0bc" stroke-width="1.8"/></svg>
<i class="sep" style="left:768px;top:4px;height:18px"></i>
<svg class="ic" style="left:774px;top:5px" viewBox="0 0 16 16"><path d="M0 3h2M2.5 1v4M4.5 1v4M5 3h5M0 8h2M2.5 6v4M4.5 6v4M5 8h5M7.5 8v5h3" stroke="#1010f0" stroke-width="1.1" fill="none"/><path d="M11.5 1.5v.01M10.5 3v.01M11.5 4.5v.01M13.5 1.5v.01M14.5 3v.01M13.5 4.5v.01" stroke="#1010f0" stroke-width="1.1" fill="none" stroke-linecap="square"/><path d="M11.5 6.5v.01M10.5 8v.01M11.5 9.5v.01M13.5 6.5v.01M14.5 8v.01M13.5 9.5v.01" stroke="#1010f0" stroke-width="1.1" fill="none" stroke-linecap="square"/><path d="M11.5 11.5v.01M10.5 13v.01M11.5 14.5v.01M13.5 11.5v.01M14.5 13v.01M13.5 14.5v.01" stroke="#1010f0" stroke-width="1.1" fill="none" stroke-linecap="square"/><path d="M15 3h1M15 8h1M15 13h1" stroke="#1010f0" stroke-width="1.1" fill="none"/></svg>
<div class="actbtn" style="left:793px;top:2px;width:23px;height:23px"></div>
<svg class="ic" style="left:796px;top:5px" viewBox="0 0 16 16"><path d="M0 4h2M2.5 2v4M4.5 2v4M5 4h7M0 10h2M2.5 8v4M4.5 8v4M5 10h4M7.5 10v4h2" stroke="#1010f0" stroke-width="1.1" fill="none"/><path d="M11 8.5v.01M10 10v.01M11 11.5v.01M13 8.5v.01M14 10v.01M13 11.5v.01" stroke="#1010f0" stroke-width="1.1" fill="none" stroke-linecap="square"/><path d="M11 12.5v.01M10 14v.01M11 15.5v.01M13 12.5v.01M14 14v.01M13 15.5v.01" stroke="#1010f0" stroke-width="1.1" fill="none" stroke-linecap="square"/><path d="M14.5 10h1.500M14.5 14h1.5" stroke="#1010f0" stroke-width="1.1" fill="none"/><path d="M7 5l5.5-5l2.5 2.500l-5.5 5z" fill="#f01010"/><path d="M7 5l-1.5 3.500l4-1z" fill="#f0e020" stroke="#000" stroke-width=".5"/></svg>
<svg class="ic" style="left:818px;top:5px" viewBox="0 0 16 16"><circle cx="9" cy="6" r="4.8" fill="#fff" stroke="#1818e0" stroke-width="1.1"/><path d="M6.5 4h5M6.5 6h5M6.5 8h4" stroke="#555" stroke-width="1" fill="none"/><path d="M12.5 9.500l3.5 4" stroke="#1818e0" stroke-width="1.2"/><rect x="0" y="10" width="9" height="5.5" fill="#111"/><rect x="1" y="11" width="2.5" height="4" fill="#d01818"/><rect x="4" y="11" width="4.5" height="4" fill="#f0f0f0"/></svg>
<svg class="ic" style="left:840px;top:5px" viewBox="0 0 16 16"><circle cx="9" cy="6" r="4.8" fill="#fff" stroke="#1818e0" stroke-width="1.1"/><path d="M6.5 5h4M6.5 7h4" stroke="#777" stroke-width="1" fill="none"/><path d="M12.5 9.500l3.5 4" stroke="#1818e0" stroke-width="1.2"/><path d="M8 6l5.5-5.500l2.5 2.500l-5.5 5.500z" fill="#f01010"/><path d="M8 6l-1 3l3.5-.5z" fill="#f0e020"/><rect x="0" y="10" width="9" height="5.5" fill="#111"/><rect x="1" y="11" width="2.5" height="4" fill="#d01818"/><rect x="4" y="11" width="4.5" height="4" fill="#f0f0f0"/></svg>
<svg class="ic" style="left:862px;top:5px" viewBox="0 0 16 16"><rect x="0" y="1" width="16" height="10" fill="#b4b4ca"/><text x="1" y="8.5" font-size="8.5" font-family="Liberation Sans, sans-serif" fill="#ececf4" text-anchor="start" textLength="14" lengthAdjust="spacingAndGlyphs" font-weight="bold">Dev</text><circle cx="9.5" cy="10.5" r="3.5" fill="#e4e4ee" stroke="#a8a8c0" stroke-width="1.2"/><path d="M12 13l3 3" stroke="#a8a8c0" stroke-width="1.6"/></svg>
<svg class="ic" style="left:884px;top:5px" viewBox="0 0 16 16"><circle cx="7.5" cy="7" r="5.8" fill="#fff" stroke="#0a0a5a" stroke-width="1.7"/><path d="M12 11.500l3.5 4" stroke="#901818" stroke-width="2"/><path d="M3.5 5.500h5M6 3v5M7 9.500h5" stroke="#000" stroke-width="1.7"/></svg>
<div class="tend" style="left:905px;top:0;height:27px"><svg style="left:2px;top:16px" width="8" height="8" viewBox="0 0 8 8"><path d="M1 .5h6" stroke="#000" stroke-width="1"/><path d="M1 1.500h6" stroke="#fff" stroke-width="1" transform="translate(1,1)"/><path d="M.5 3.500h7l-3.5 3.500z" fill="#000"/><path d="M4.5 7l3-3" stroke="#fff" stroke-width="1"/></svg></div>
</div>
</div>
<div id="nav" class="abs">
<div id="navhead" class="abs"><i class="grip" style="left:0;top:6px;height:17px;width:2px"></i><span>导航</span><svg style="left:131px;top:7px" width="26" height="12" viewBox="0 0 26 12"><path d="M2 1.500h6M3.5 1.500v5M6.5 1.500v5M1 6.500h8M5 7v4" stroke="#000" stroke-width="1.3" fill="none"/><path d="M17 2l7 7M24 2l-7 7" stroke="#000" stroke-width="1.7"/></svg></div>
<div id="projhead" class="abs"><span>工程</span></div>
<div id="navtb" class="abs"><svg style="left:0px;top:2px" width="163" height="22" viewBox="0 0 163 22"><path d="M-1.5 4.500h8l3 3v9h-11z" fill="#fff" stroke="#555"/><path d="M10 3.500h6M13 .5v6" stroke="#ff7a00" stroke-width="2.2"/><g transform="translate(23,4)"><path d="M0.5 0.5h5l3 3v6h-8z" fill="#ececf4" stroke="#b4b4cc"/><path d="M2 4.5h5" stroke="#c8c8dc"/><path d="M2 6.5h5" stroke="#c8c8dc"/><path d="M5.5 3.5h5l3 3v6h-8z" fill="#ececf4" stroke="#b4b4cc"/><path d="M7 7.5h5" stroke="#c8c8dc"/><path d="M7 9.5h5" stroke="#c8c8dc"/></g><g transform="translate(44,3)"><rect x=".5" y="1.5" width="11" height="11" fill="#d8d8e6" stroke="#b4b4cc"/><rect x="3.5" y=".5" width="5" height="2.5" fill="#ececf4" stroke="#b4b4cc"/><path d="M6.5 5.5h6l3 3v5h-9z" fill="#f0f0f6" stroke="#b4b4cc"/><path d="M8 9.5h6" stroke="#c8c8dc"/><path d="M8 11.5h6" stroke="#c8c8dc"/></g><g transform="translate(67,1)"><path d="M0.5 0.5h5l3 3v6h-8z" fill="#fff" stroke="#444"/><path d="M2 4.5h5" stroke="#888"/><path d="M2 6.5h5" stroke="#888"/><circle cx="11" cy="10.5" r="4.5" fill="#1a6ad8"/><path d="M11 8v.8M11 9.800v3.2" stroke="#fff" stroke-width="1.6"/></g><g transform="translate(90,2)"><path d="M.5 .5h8l3.5 3.500v11h-11.500z" fill="#e8f0ff" stroke="#5a6ad8"/><path d="M3 7a3.5 3.5 0 0 1 6-1.500l1-1v3.500h-3.500l1-1a2 2 0 0 0-3 0zM10 9a3.5 3.5 0 0 1-6 1.500l-1 1v-3.500h3.500l-1 1a2 2 0 0 0 3 0z" fill="#10a030"/></g><path d="M109.5 4v15" stroke="#8d8eae"/><path d="M110.5 4v15" stroke="#f4f4fa"/><g transform="translate(116,1)"><path d="M3 0h8v11h-8z" fill="#4a4a4a"/><path d="M0 11l3-3h6l3 3z" fill="#6a6a6a"/><rect x="6" y="6" width="3.5" height="9" fill="#f04040"/><rect x="10" y="5" width="5" height="10.5" fill="#f4f4f4" stroke="#444" stroke-width=".8"/><rect x="11" y="4" width="1.5" height="1.5" fill="#20c020"/></g><path d="M133.5 10.500h5l-2.5 2.500z" fill="#000"/></svg></div>
<div id="tree" class="abs">
<i class="vd" style="left:3px;top:16px;height:314px"></i>
<i class="vd" style="left:22px;top:116px;height:194px"></i>
<i class="vd" style="left:41px;top:136px;height:10px"></i>
<i class="vd" style="left:60px;top:156px;height:34px"></i>
<i class="vd" style="left:41px;top:216px;height:10px"></i>
<i class="vd" style="left:60px;top:236px;height:34px"></i>
<div class="tr abs" style="top:0px">
<i class="hd" style="left:8px;width:5px"></i>
<i class="bx p" style="left:-1px"></i>
<svg style="left:14px;top:2px" width="17" height="16" viewBox="0 0 17 16"><path d="M1.5 4.500h4l1.5 1.500h7.500v9h-13z" fill="#f7c63a" stroke="#9a6c10"/><path d="M1.5 15l1.5-6h13l-2 6z" fill="#ffe07a" stroke="#9a6c10" stroke-width=".8"/><rect x="3" y="1" width="7" height="8" fill="#333"/><rect x="4" y="2.5" width="5" height="1" fill="#aaa"/><rect x="4" y="5" width="5" height="1" fill="#aaa"/><path d="M14.5 2.500l-7 9" stroke="#1848c8" stroke-width="2.2"/><circle cx="14" cy="3" r="2" fill="#1848c8"/></svg>
<span style="left:35px">参数</span></div>
<div class="tr abs" style="top:20px">
<i class="hd" style="left:4px;width:9px"></i>
<svg style="left:14px;top:2px" width="17" height="16" viewBox="0 0 17 16"><path d="M1.5 4.500h4l1.5 1.500h7.500v9h-13z" fill="#f7c63a" stroke="#9a6c10"/><path d="M1.5 15l1.5-6h13l-2 6z" fill="#ffe07a" stroke="#9a6c10" stroke-width=".8"/><rect x="4" y="0" width="5" height="10" fill="#222"/><rect x="8" y="2" width="5" height="9" fill="#8a8a8a" stroke="#333" stroke-width=".6"/><rect x="4.5" y="5" width="3" height="5" fill="#bbb"/><rect x="10" y="3" width="1.5" height="1.5" fill="#e02020"/></svg>
<span style="left:35px">特殊模块(智能功能模块)</span></div>
<div class="tr abs" style="top:40px">
<i class="hd" style="left:4px;width:9px"></i>
<svg style="left:14px;top:2px" width="17" height="16" viewBox="0 0 17 16"><circle cx="6.5" cy="6.5" r="6" fill="#2a6ad0"/><path d="M3 3c2-2 5-2 6 0c-1 2-3 2-3 4c-2 0-3-2-3-4z" fill="#40b040"/><rect x="5.5" y="6.5" width="7" height="9" fill="#fff" stroke="#444" stroke-width=".8"/><path d="M7 9h4M7 11h4M7 13h3" stroke="#888" stroke-width=".8"/><path d="M10 12l5-5l1.5 1.500l-5 5z" fill="#30b030" stroke="#0a600a" stroke-width=".5"/></svg>
<span style="left:35px">全局软元件注释</span></div>
<div class="tr abs" style="top:60px">
<i class="hd" style="left:8px;width:5px"></i>
<i class="bx p" style="left:-1px"></i>
<svg style="left:14px;top:2px" width="17" height="16" viewBox="0 0 17 16"><path d="M1.5 4.500h4l1.5 1.500h7.500v9h-13z" fill="#f7c63a" stroke="#9a6c10"/><path d="M1.5 15l1.5-6h13l-2 6z" fill="#ffe07a" stroke="#9a6c10" stroke-width=".8"/><circle cx="8" cy="5" r="4.5" fill="#2a6ad0"/><path d="M5 3c2-2 4-1 5 0c-1 2-4 2-5 0z" fill="#40b040"/><rect x="5.5" y="6.5" width="9" height="8" fill="#fff" stroke="#2020d0"/><path d="M5.5 9.500h9M5.5 12h9M9 6.500v8" stroke="#2020d0" stroke-width=".8"/></svg>
<span style="left:35px">全局标签</span></div>
<div class="tr abs" style="top:80px">
<i class="hd" style="left:8px;width:5px"></i>
<i class="bx p" style="left:-1px"></i>
<svg style="left:14px;top:2px" width="17" height="16" viewBox="0 0 17 16"><path d="M1.5 4.500h4l1.5 1.500h7.500v9h-13z" fill="#f7c63a" stroke="#9a6c10"/><path d="M1.5 15l1.5-6h13l-2 6z" fill="#ffe07a" stroke="#9a6c10" stroke-width=".8"/><rect x="4.5" y="1.5" width="10" height="7" fill="#5ac8e8" stroke="#333"/><path d="M3 9h13l1 3h-15z" fill="#222"/><path d="M1 2l7 7" stroke="#2a8a2a" stroke-width="2.4"/></svg>
<span style="left:35px">程序设置</span></div>
<div class="tr abs" style="top:100px">
<i class="hd" style="left:8px;width:5px"></i>
<i class="bx" style="left:-1px"></i>
<svg style="left:14px;top:2px" width="17" height="16" viewBox="0 0 17 16"><path d="M1.5 5.500h4l1.5 1.500h8.500v8.500h-14z" fill="#f7d25a" stroke="#c89a24"/><path d="M1.5 15.500l1.5-6h13l-1.5 6z" fill="#ffe890" stroke="#c89a24" stroke-width=".8"/><circle cx="6" cy="4.5" r="3" fill="#f090b0"/><circle cx="11" cy="3.5" r="2.5" fill="#70c070"/><path d="M13 1l3 4h-4z" fill="#40a040"/><circle cx="8" cy="10" r="2.5" fill="#b8e0b0" opacity=".8"/></svg>
<span style="left:35px">程序部件</span></div>
<div class="tr abs" style="top:120px">
<i class="hd" style="left:27px;width:5px"></i>
<i class="bx" style="left:18px"></i>
<svg style="left:33px;top:2px" width="17" height="16" viewBox="0 0 17 16"><path d="M1.5 6.500h4l1 1h9v8h-14z" fill="#f7c63a" stroke="#9a6c10"/><path d="M4.5 1.500h6l3 3v9h-9z" fill="#e8e8f0" stroke="#777"/><path d="M6.5 3.500h6l2.5 2.500v8.500h-8.500z" fill="#fff" stroke="#777"/><path d="M1.5 15.500l1-5h13l-1 5z" fill="#ffe07a" stroke="#9a6c10" stroke-width=".8"/></svg>
<span style="left:54px">程序</span></div>
<div class="tr abs" style="top:140px">
<i class="hd" style="left:46px;width:5px"></i>
<i class="bx" style="left:37px"></i>
<svg style="left:52px;top:2px" width="17" height="16" viewBox="0 0 17 16"><path d="M1.5 6.500h3l1 1h9v8h-13z" fill="#f7c63a" stroke="#9a6c10"/><path d="M4.5 1.500h7l3 3v11h-10z" fill="#fff" stroke="#777"/><rect x="6" y="6" width="7" height="6" fill="#e01010"/><path d="M6.5 9h2M11 9h2M8.5 7v4M10.5 7v4" stroke="#fff" stroke-width=".9"/><path d="M1.5 15.500v-5h3v5z" fill="#ffe07a" stroke="#9a6c10" stroke-width=".8"/></svg>
<span style="left:73px;letter-spacing:1.1px">MAIN</span></div>
<div class="tr abs" style="top:160px">
<i class="hd" style="left:61px;width:9px"></i>
<svg style="left:71px;top:2px" width="17" height="16" viewBox="0 0 17 16"><path d="M1.5 .5h8l4 4v11h-12z" fill="#fff" stroke="#999"/><path d="M9.5 .5v4h4" fill="#e8e8e8" stroke="#999"/><rect x="4" y="6" width="2.5" height="7" fill="#e01010"/><rect x="8" y="6" width="2.5" height="7" fill="#e01010"/><rect x="2.5" y="8.7" width="9.5" height="1.6" fill="#e01010"/></svg>
<span style="left:92px">程序本体</span></div>
<div class="tr abs" style="top:180px">
<i class="hd" style="left:61px;width:9px"></i>
<svg style="left:71px;top:2px" width="17" height="16" viewBox="0 0 17 16"><path d="M.5 .5h8l3 3v9h-11z" fill="#dce6fa" stroke="#9ab0e0"/><path d="M2 3h6M2 5h7M2 7h4" stroke="#a8c0f0" stroke-width=".8"/><rect x="5.5" y="6.5" width="10" height="9" fill="#fff" stroke="#2020d0"/><path d="M5.5 9.500h10M5.5 12.500h10M9 6.500v9" stroke="#2020d0" stroke-width=".9"/></svg>
<span style="left:92px">局部标签</span></div>
<div class="tr abs" style="top:200px">
<i class="hd" style="left:27px;width:5px"></i>
<i class="bx" style="left:18px"></i>
<svg style="left:33px;top:2px" width="17" height="16" viewBox="0 0 17 16"><path d="M1.5 4.500h4l1.5 1.500h7.500v9h-13z" fill="#f7c63a" stroke="#9a6c10"/><path d="M1.5 15l1.5-6h13l-2 6z" fill="#ffe07a" stroke="#9a6c10" stroke-width=".8"/><rect x="5" y="1" width="8" height="4" fill="#2848b8"/><rect x="4" y="5" width="10" height="7" fill="#30a040" stroke="#186020" stroke-width=".6"/><rect x="6" y="7" width="6" height="3" fill="#a0e0a0"/></svg>
<span style="left:54px">FB管理</span></div>
<div class="tr abs" style="top:220px">
<i class="hd" style="left:46px;width:5px"></i>
<i class="bx" style="left:37px"></i>
<svg style="left:52px;top:2px" width="17" height="16" viewBox="0 0 17 16"><path d="M1.5 4.500h4l1.5 1.500h7.500v9h-13z" fill="#f7c63a" stroke="#9a6c10"/><path d="M1.5 15l1-6.500h13.500l-1.5 6.500z" fill="#ffe07a" stroke="#9a6c10" stroke-width=".8"/><rect x="5" y="6.5" width="8" height="6" fill="#30b040" stroke="#186020" stroke-width=".6"/><rect x="7" y="8" width="4" height="3" fill="#c0f0c0"/></svg>
<span style="left:73px">手臂取料</span></div>
<div class="tr abs" style="top:240px">
<i class="hd" style="left:61px;width:9px"></i>
<svg style="left:71px;top:2px" width="17" height="16" viewBox="0 0 17 16"><path d="M1.5 .5h8l4 4v11h-12z" fill="#fff" stroke="#999"/><path d="M9.5 .5v4h4" fill="#e8e8e8" stroke="#999"/><rect x="4" y="6" width="2.5" height="7" fill="#e01010"/><rect x="8" y="6" width="2.5" height="7" fill="#e01010"/><rect x="2.5" y="8.7" width="9.5" height="1.6" fill="#e01010"/></svg>
<span class="sel" style="left:92px">程序本体</span></div>
<div class="tr abs" style="top:260px">
<i class="hd" style="left:61px;width:9px"></i>
<svg style="left:71px;top:2px" width="17" height="16" viewBox="0 0 17 16"><path d="M.5 .5h8l3 3v9h-11z" fill="#dce6fa" stroke="#9ab0e0"/><path d="M2 3h6M2 5h7M2 7h4" stroke="#a8c0f0" stroke-width=".8"/><rect x="5.5" y="6.5" width="10" height="9" fill="#fff" stroke="#2020d0"/><path d="M5.5 9.500h10M5.5 12.500h10M9 6.500v9" stroke="#2020d0" stroke-width=".9"/></svg>
<span style="left:92px">局部标签</span></div>
<div class="tr abs" style="top:280px">
<i class="hd" style="left:23px;width:9px"></i>
<svg style="left:33px;top:2px" width="17" height="16" viewBox="0 0 17 16"><rect x="1" y="2" width="15" height="13" rx="1" fill="#3a2a10"/><rect x="2.5" y="3.5" width="4" height="2.5" fill="#f04040"/><rect x="2.5" y="7" width="4" height="2.5" fill="#f0d020"/><rect x="2.5" y="10.5" width="4" height="2.5" fill="#40c040"/><rect x="8" y="3.5" width="6.5" height="2.5" fill="#f0e8c0"/><rect x="8" y="7" width="6.5" height="2.5" fill="#f0e8c0"/><rect x="8" y="10.5" width="6.5" height="2.5" fill="#f0e8c0"/></svg>
<span style="left:54px">结构体</span></div>
<div class="tr abs" style="top:300px">
<i class="hd" style="left:23px;width:9px"></i>
<svg style="left:33px;top:2px" width="17" height="16" viewBox="0 0 17 16"><path d="M1.5 7.500h3l1 1h10v7h-14z" fill="#f7c63a" stroke="#9a6c10"/><path d="M3.5 1.500h6l3 3v9h-9z" fill="#e8e8f0" stroke="#777"/><path d="M5.5 3.500h6l3 3v8h-9z" fill="#fff" stroke="#777"/><path d="M1.5 15.500l1-4.500h13l-1 4.500z" fill="#ffe07a" stroke="#9a6c10" stroke-width=".8"/></svg>
<span style="left:54px">局部软元件注释</span></div>
<div class="tr abs" style="top:320px">
<i class="hd" style="left:8px;width:5px"></i>
<i class="bx p" style="left:-1px"></i>
<svg style="left:14px;top:2px" width="17" height="16" viewBox="0 0 17 16"><rect x="1.5" y="2.5" width="14" height="13" rx="2" fill="#3a2a10" stroke="#1a1208"/><rect x="4" y="0" width="2.5" height="4" fill="#222"/><rect x="10" y="0" width="2.5" height="4" fill="#222"/><circle cx="8.5" cy="9.5" r="4.5" fill="#e8e8f0"/><path d="M8.5 9.500v-4.500a4.5 4.5 0 0 1 4.5 4.500z" fill="#e03030"/><path d="M8.5 9.500h4.500a4.5 4.5 0 0 1-6 4.200z" fill="#3060d0"/><path d="M8.5 9.500l-2 4.200a4.5 4.5 0 0 1-2-6z" fill="#40b040"/></svg>
<span style="left:35px">软元件存储器</span></div>
</div>
<div id="hscroll" class="abs"><div class="th"></div><svg style="left:0px;top:0px" width="162" height="17" viewBox="0 0 162 17"><path d="M4.5 5l-4 3.500l4 3.500M152.5 5l4 3.500l-4 3.5" stroke="#404040" stroke-width="1.8" fill="none"/></svg></div>
<div id="split" class="abs"><i style="left:62px;top:2px;width:34px;height:2px;background:repeating-linear-gradient(90deg,#fff 0,#fff 1px,#44446a 1px,#44446a 2px,transparent 2px,transparent 4px)"></i></div>
<div id="projbtn" class="abs"><svg style="left:-3px;top:2px" width="28" height="28" viewBox="0 0 28 28"><path d="M8 2h10v14h-10z" fill="#4a4a4a"/><path d="M2 16l6-5h8l4 5z" fill="#7a7a7a"/><rect x="10" y="10" width="5" height="14" fill="#e83030"/><rect x="16" y="8" width="7" height="16" fill="#e8e8e8" stroke="#444"/><path d="M18 12h3M18 15h3M18 18h3" stroke="#555"/><rect x="17" y="6" width="2" height="2" fill="#20c020"/></svg><span>工程</span></div>
<div id="navbot" class="abs"><svg style="left:97px;top:8px" width="62" height="18" viewBox="0 0 62 18"><path d="M2.5 2.500c3-1.5 5-1.5 7.5 0c2.5-1.5 4.5-1.5 7.5 0v10c-3-1-5-1-7.5 0c-2.5-1-4.5-1-7.5 0z" fill="#fff" stroke="#7a5a2a"/><path d="M10 2.500v10" stroke="#7a5a2a"/><path d="M11 10l4-4l2 2l-4 4z" fill="#f0c020" stroke="#8a6a10" stroke-width=".5"/><circle cx="15" cy="13" r="2" fill="#f0c020"/><rect x="30.5" y="2.5" width="10" height="8" fill="#4a4a4a" stroke="#222"/><rect x="27.5" y="5.5" width="10" height="9" fill="#d8e8d8" stroke="#1a8a1a"/><rect x="36" y="9" width="6" height="7" fill="#333"/><path d="M51 2l2.5 2l-2.5 2M54.5 2l2.5 2l-2.5 2" stroke="#000" fill="none" stroke-width="1.2"/><path d="M50.5 10.500h7l-3.5 3.500z" fill="#000"/></svg></div>
<i id="navr"></i>
</div>
<div id="mdi" class="abs">
<div id="pg" class="abs" style="left:-164px;top:-95px;width:1360px;height:757px">
<div style="left:164px;top:95px;width:1196px;height:25px;background:linear-gradient(#eeeef6,#f3f3f9 60%,#ebebf4)"></div>
<svg style="left:0;top:0" width="1360" height="757" viewBox="0 0 1360 757"><defs><linearGradient id="tg" x1="0" y1="0" x2="0" y2="1"><stop offset="0" stop-color="#ffffff"/><stop offset=".5" stop-color="#f0f0f7"/><stop offset="1" stop-color="#d9d9e8"/></linearGradient><linearGradient id="ta" x1="0" y1="0" x2="0" y2="1"><stop offset="0" stop-color="#fff6dc"/><stop offset=".45" stop-color="#ffdf9e"/><stop offset="1" stop-color="#f9b55a"/></linearGradient></defs><path d="M171.5 120L193 99.500q1.5-1 3-1H394q3.5 0 3.5 3.500V120z" fill="url(#tg)" stroke="#1c46a8" stroke-width="1.2"/><path d="M397.5 120V102q0-3.5 3.5-3.500H562q4 0 2 2.500L546 120z" fill="url(#tg)" stroke="#1c46a8" stroke-width="1.2"/><path d="M785.5 120V102q0-3.5 3.5-3.500H967.500q3.5 0 3.5 3.500V120z" fill="url(#tg)" stroke="#1c46a8" stroke-width="1.2"/><path d="M546.5 120.500L566 100.500q2-2 5-2H780q3.5 0 3.5 3.500V120.500z" fill="url(#ta)" stroke="#c9a36a" stroke-width="1"/><rect x="766.5" y="102.5" width="14" height="14" rx="1.5" fill="#fdf3e0" stroke="#b8a078"/><path d="M770 106l7 7M777 106l-7 7" stroke="#8a8a8a" stroke-width="1.8"/><path d="M1319.5 103.500v8l-4.5-4z" fill="none" stroke="#000" stroke-width="1"/><path d="M1331.5 103.500v8l4.5-4z" fill="none" stroke="#000" stroke-width="1"/><path d="M1345.5 108h9l-4.5 4.500z" fill="#000"/><path d="M198.5 103l9-1.500l1.5 11l-8.5 2.500z" fill="#5ac0f0" stroke="#b0b8d8" stroke-width=".8"/><rect x="203.5" y="107.5" width="10" height="9" fill="#fff" stroke="#3a3af0" stroke-width="1.2"/><path d="M203.5 110.5h10M203.5 113.5h10M207 107.5v9" stroke="#3a3af0" stroke-width="1"/><path d="M409.5 102.5h7l4 4v10h-11z" fill="#fff" stroke="#9a9a9a"/><path d="M416.5 102.5v4h4" fill="#eee" stroke="#9a9a9a" stroke-width=".8"/><rect x="412" y="108" width="2" height="6" fill="#e01010"/><rect x="415.5" y="108" width="2" height="6" fill="#e01010"/><rect x="410.8" y="110.3" width="8" height="1.5" fill="#e01010"/><path d="M576.5 102.5h7l4 4v10h-11z" fill="#fff" stroke="#9a9a9a"/><path d="M583.5 102.5v4h4" fill="#eee" stroke="#9a9a9a" stroke-width=".8"/><rect x="579" y="108" width="2" height="6" fill="#e01010"/><rect x="582.5" y="108" width="2" height="6" fill="#e01010"/><rect x="577.8" y="110.3" width="8" height="1.5" fill="#e01010"/><path d="M793.5 103l9-1.500l1.5 11l-8.5 2.500z" fill="#5ac0f0" stroke="#b0b8d8" stroke-width=".8"/><rect x="798.5" y="107.5" width="10" height="9" fill="#fff" stroke="#3a3af0" stroke-width="1.2"/><path d="M798.5 110.5h10M798.5 113.5h10M802 107.5v9" stroke="#3a3af0" stroke-width="1"/></svg>
<span class="tabt" style="left:217px;top:102px;font-size:12.100px">函数/FB标签设置 手臂取料 [FB]</span>
<span class="tabt" style="left:426px;top:102px">[PRG]写入 MAIN 102步</span>
<span class="tabt" style="left:594px;top:102px;font-weight:bold">[FB]写入 手臂取料(MAIN....</span>
<span class="tabt" style="left:812px;top:102px">局部标签设置 MAIN [PRG]</span>
<div style="left:167px;top:120px;width:1193px;height:617px;background:#2a5ab8"></div>
<div style="left:168px;top:121px;width:1191px;height:615px;background:#f9b963"></div>
<div style="left:169px;top:122px;width:1189px;height:613px;background:#a98f6c"></div>
<div style="left:170px;top:122px;width:1188px;height:613px;background:#6e6e6e"></div>
<div style="left:171px;top:124px;width:1187px;height:611px;background:#ececec"></div>
<div id="edw" style="left:171px;top:124px;width:1169px;height:609px;background:#fff"></div>
<div style="left:1340px;top:124px;width:17px;height:610px;background:#f0f0f0"></div>
<div style="left:1340px;top:141px;width:15px;height:17px;background:#cdcdcd"></div>
<svg style="left:0;top:0" width="1360" height="757" viewBox="0 0 1360 757" shape-rendering="crispEdges"><rect x="308" y="124" width="1" height="609" fill="#000"/><rect x="1330" y="124" width="1" height="609" fill="#000"/><rect x="643" y="313" width="1" height="420" fill="#000"/><rect x="308" y="158" width="36" height="1" fill="#000"/><rect x="344" y="148" width="1" height="21" fill="#000"/><rect x="356" y="148" width="1" height="21" fill="#000"/><rect x="357" y="158" width="625" height="1" fill="#000"/><rect x="308" y="313" width="36" height="1" fill="#000"/><rect x="344" y="303" width="1" height="21" fill="#000"/><rect x="356" y="303" width="1" height="21" fill="#000"/><rect x="357" y="313" width="71" height="1" fill="#000"/><rect x="428" y="303" width="1" height="21" fill="#000"/><rect x="440" y="303" width="1" height="21" fill="#000"/><rect x="441" y="313" width="155" height="1" fill="#000"/><rect x="596" y="303" width="1" height="21" fill="#000"/><rect x="608" y="303" width="1" height="21" fill="#000"/><rect x="609" y="313" width="71" height="1" fill="#000"/><rect x="680" y="303" width="1" height="21" fill="#000"/><rect x="692" y="303" width="1" height="21" fill="#000"/><path d="M673.5 324.5L697.5 303.5" stroke="#000" stroke-width="1"/><rect x="693" y="313" width="457" height="1" fill="#000"/><rect x="308" y="468" width="36" height="1" fill="#000"/><rect x="344" y="458" width="1" height="21" fill="#000"/><rect x="356" y="458" width="1" height="21" fill="#000"/><rect x="357" y="468" width="71" height="1" fill="#000"/><rect x="428" y="458" width="1" height="21" fill="#000"/><rect x="440" y="458" width="1" height="21" fill="#000"/><rect x="441" y="468" width="71" height="1" fill="#000"/><rect x="512" y="458" width="1" height="21" fill="#000"/><rect x="524" y="458" width="1" height="21" fill="#000"/><rect x="525" y="468" width="118" height="1" fill="#000"/><rect x="308" y="624" width="36" height="1" fill="#000"/><rect x="344" y="614" width="1" height="21" fill="#000"/><rect x="356" y="614" width="1" height="21" fill="#000"/><rect x="357" y="624" width="71" height="1" fill="#000"/><rect x="428" y="614" width="1" height="21" fill="#000"/><rect x="440" y="614" width="1" height="21" fill="#000"/><rect x="441" y="624" width="202" height="1" fill="#000"/><rect x="982" y="148" width="1" height="21" fill="#000"/><rect x="982" y="148" width="6" height="1" fill="#000"/><rect x="982" y="168" width="6" height="1" fill="#000"/><rect x="1328" y="148" width="1" height="21" fill="#000"/><rect x="1323" y="148" width="6" height="1" fill="#000"/><rect x="1323" y="168" width="6" height="1" fill="#000"/><rect x="1328" y="158" width="3" height="1" fill="#000"/><rect x="1150" y="303" width="1" height="21" fill="#000"/><rect x="1150" y="303" width="6" height="1" fill="#000"/><rect x="1150" y="323" width="6" height="1" fill="#000"/><rect x="1328" y="303" width="1" height="21" fill="#000"/><rect x="1323" y="303" width="6" height="1" fill="#000"/><rect x="1323" y="323" width="6" height="1" fill="#000"/><rect x="1328" y="313" width="3" height="1" fill="#000"/><rect x="309" y="280" width="82" height="153" fill="none" stroke="#0000a0" stroke-width="2"/><rect x="308" y="279" width="1" height="155" fill="#e8e070"/></svg>
<svg style="left:0;top:0" width="1360" height="757" viewBox="0 0 1360 757"><path d="M1343.5 136l4-4l4 4M1343.5 722.500l4 4l4-4" stroke="#505050" stroke-width="2" fill="none"/><defs><filter id="bl" x="-10%" y="-10%" width="120%" height="120%"><feGaussianBlur stdDeviation=".45"/></filter></defs><g filter="url(#bl)" fill="none" stroke-linecap="round" stroke-linejoin="round" stroke="#ee3642"><path d="M332.0 248.0L330.9 250.7L327.7 253.8L323.8 258.3L318.1 262.4L313.9 265.3L309.4 267.7L305.0 270.6L299.2 275.7L294.0 280.5L289.2 285.7L285.3 291.7L283.5 297.5L281.8 303.9L280.7 308.0" stroke-width="4.8" opacity=".45"/><path d="M412.0 314.7L411.4 310.2L410.8 304.1L409.7 298.3L409.2 293.5L407.7 288.2L406.0 283.6L402.9 276.7L399.4 271.0L396.0 265.7L391.6 260.8L385.9 257.0L380.1 253.6L374.0 250.2L367.1 248.1L361.7 246.4L356.0 245.2L351.0 244.8L343.2 243.8L337.9 243.7L337.5 244.2L338.5 244.3" stroke-width="4.8" opacity=".42"/><path d="M280.7 308.0L279.9 313.3L279.2 320.7L278.5 327.3L276.8 333.4L275.8 338.0L275.4 344.0L274.9 349.2L274.4 354.6L274.3 361.2L274.0 367.2L274.0 371.6L274.0 377.3L273.5 382.0L274.0 387.7L273.7 393.3L273.5 398.6L273.1 403.8L272.9 409.2L273.1 413.6L272.2 418.7L272.6 424.8L272.0 430.4L271.5 436.0L270.9 441.8L270.5 447.9L270.0 453.9L269.5 459.8L268.8 464.2L268.3 470.8L267.7 475.6L266.9 479.7L265.9 484.4L264.2 489.1L264.0 494.5L262.4 499.8L261.9 505.2L261.0 512.2L261.0 517.1L260.3 523.1L259.9 529.6L259.7 536.3L258.9 542.1L258.3 546.7L258.1 551.6L257.4 556.9L257.4 561.8L256.6 568.0L256.6 573.2L256.9 578.1L256.4 583.9L256.4 589.6L256.3 595.0L256.7 600.0L256.4 605.9L256.5 611.0L257.5 616.4L257.6 620.8L257.9 626.1L258.1 631.5L259.3 636.0L260.1 641.2L261.2 645.9L262.6 651.1L263.6 655.3L266.0 660.9L267.5 665.0L270.2 670.6L272.6 676.2L275.7 681.8L279.5 686.8L284.4 691.5L289.0 696.6L293.9 699.9L299.8 703.1L304.7 705.9L310.6 707.9L315.8 709.8L321.7 710.9L327.3 710.8L332.4 710.7L338.0 709.4L344.3 706.3L350.7 702.7L356.7 699.3L361.7 694.5L368.1 691.2L373.9 686.5L377.2 682.1L381.7 677.0L384.9 671.9L388.0 666.6L391.1 660.9L392.6 656.1L395.3 650.8L396.6 645.5L398.4 639.1L399.3 633.4L400.0 626.5L400.1 619.7L400.0 613.1L399.9 606.9L399.9 599.6L400.0 595.4L400.1 590.4L400.2 584.8L399.6 579.5L400.0 573.8L400.9 568.8L401.1 564.0L401.9 558.3L402.2 553.5L403.0 548.3L403.4 542.5L404.2 537.9L404.5 532.7L405.7 527.5L406.3 521.6L406.8 517.1L407.0 511.4L407.9 506.4L408.7 501.2L409.6 495.6L409.6 490.2L410.3 484.5L411.6 479.7L411.3 474.3L411.8 469.8L412.1 464.1L412.1 457.9L411.7 453.6L411.5 449.0L412.0 443.4L411.3 437.6L411.5 432.1L411.8 426.8L411.7 421.7L411.3 416.0L411.3 410.7L411.2 405.1L411.3 399.2L411.3 394.1L411.0 388.3L411.3 383.2L411.9 377.3L411.9 372.3L411.4 366.8L411.3 360.9L411.9 354.9L412.1 348.7L412.2 342.9L411.6 337.6L411.6 330.5L412.3 323.9L411.6 318.3L412.0 314.7" stroke-width="3.4" opacity=".7" stroke-linecap="butt"/><path d="M332 241.5L332 247" stroke-width="3.6" opacity=".9"/></g></svg>
<span class="sn" style="left:272.700px;top:149px">(    0)</span>
<span class="sn" style="left:272.700px;top:304px">(    8)</span>
<span class="lb" style="left:289px;top:127px;width:120px;text-align:center">fb使能</span>
<span class="dv" style="left:989px;top:149px">DECO</span>
<span class="dv" style="left:1062px;top:149px">D0</span>
<span class="dv" style="left:1146px;top:149px">M101</span>
<span class="dv" style="left:1241px;top:149px">K3</span>
<span class="cm" style="left:1151px;top:170px">初始步</span>
<span class="dv" style="left:334px;top:283px">M101</span>
<span class="cm" style="left:314px;top:325px">初始步</span>
<span class="lb" style="left:375.5px;top:282px;width:120px;text-align:center">手指上位</span>
<span class="lb" style="left:541.5px;top:282px;width:120px;text-align:center">启动</span>
<span class="lb" style="left:625px;top:282px;width:120px;text-align:center">停止</span>
<span class="dv" style="left:1157px;top:304px">INC</span>
<span class="dv" style="left:1238px;top:304px">D0</span>
<span class="dv" style="left:334px;top:438px">M102</span>
<span class="cm" style="left:314px;top:480px">第二步</span>
<span class="lb" style="left:374px;top:437px;width:120px;text-align:center">取料位</span>
<span class="lb" style="left:456px;top:437px;width:120px;text-align:center">光纤位有料</span>
<span class="dv" style="left:334px;top:593px">M103</span>
<span class="cm" style="left:314px;top:636px">第三步</span>
<span class="lb" style="left:374px;top:593px;width:120px;text-align:center">TM1</span>
</div></div>
<div id="status" class="abs">
<i style="left:311px"></i>
<i style="left:409px"></i>
<i style="left:495px"></i>
<i style="left:745px"></i>
<i style="left:853px"></i>
<i style="left:1061px"></i>
<i style="left:1229px"></i>
<i style="left:1288px"></i>
<i style="left:1324px"></i>
<span style="left:316px">简体中文</span>
<span style="left:413px">简单</span>
<span style="left:750px">FX3U/FX3UC</span>
<span style="left:858px">本站</span>
<span style="left:1066px">(8/68步)</span>
<span style="left:1234px">改写</span>
<span style="left:1291px;color:#a4a4a4">大写</span>
<span style="left:1327px;color:#a4a4a4">数字</span>
</div>
<div id="bline" class="abs"></div>
</div>
</body>
</html>
